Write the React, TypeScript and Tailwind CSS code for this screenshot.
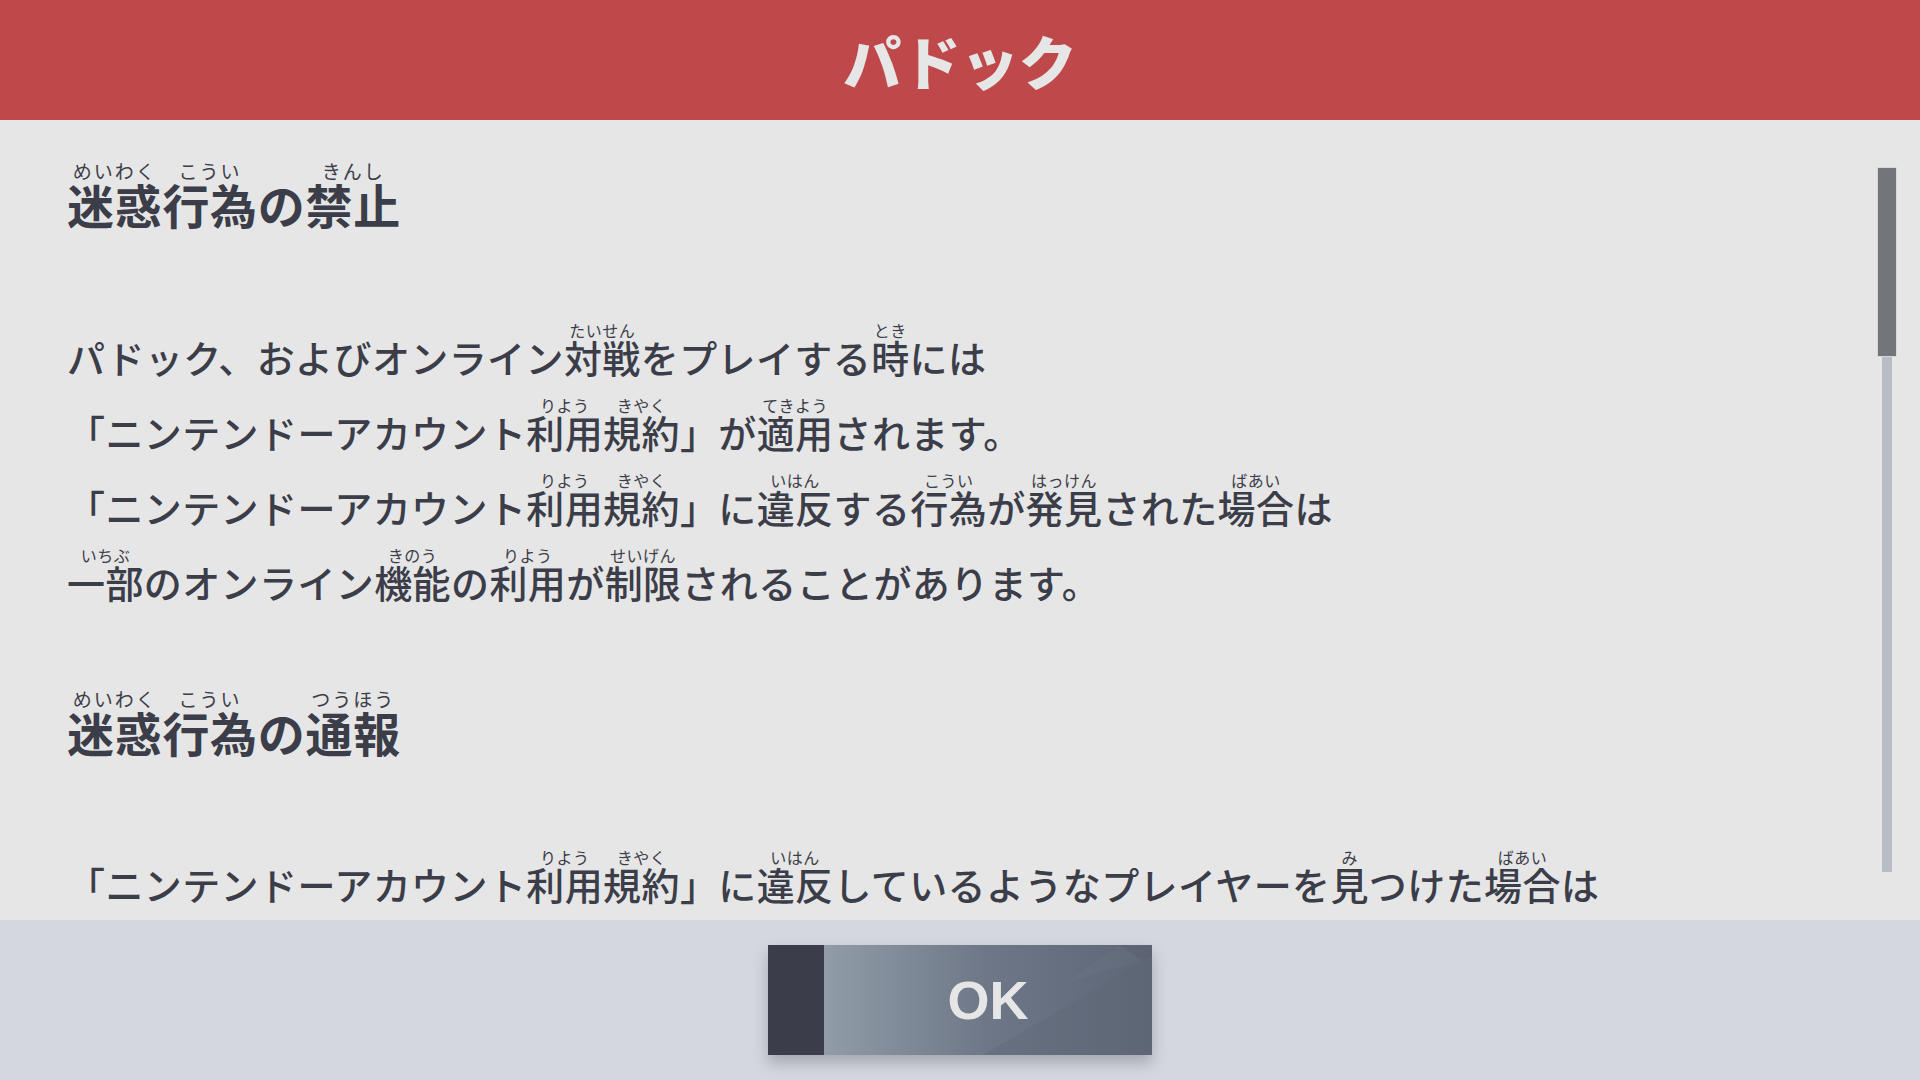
import React from "react";

type Seg = string | [string, string];

// paragraph lines; tuples are [base, reading]
const rules: Seg[][] = [
  ["パドック、およびオンライン", ["対戦", "たいせん"], "をプレイする", ["時", "とき"], "には"],
  ["「ニンテンドーアカウント", ["利用", "りよう"], ["規約", "きやく"], "」が", ["適用", "てきよう"], "されます。"],
  [
    "「ニンテンドーアカウント",
    ["利用", "りよう"],
    ["規約", "きやく"],
    "」に",
    ["違反", "いはん"],
    "する",
    ["行為", "こうい"],
    "が",
    ["発見", "はっけん"],
    "された",
    ["場合", "ばあい"],
    "は",
  ],
  [
    ["一部", "いちぶ"],
    "のオンライン",
    ["機能", "きのう"],
    "の",
    ["利用", "りよう"],
    "が",
    ["制限", "せいげん"],
    "されることがあります。",
  ],
];

const report: Seg[][] = [
  [
    "「ニンテンドーアカウント",
    ["利用", "りよう"],
    ["規約", "きやく"],
    "」に",
    ["違反", "いはん"],
    "しているようなプレイヤーを",
    ["見", "み"],
    "つけた",
    ["場合", "ばあい"],
    "は",
  ],
];

function Segs({ segs, rt }: { segs: Seg[]; rt: string }) {
  return (
    <>
      {segs.map((s, i) =>
        typeof s === "string" ? (
          <span key={i}>{s}</span>
        ) : (
          <ruby key={i} className="[ruby-align:center]">
            {s[0]}
            <rt className={rt}>{s[1]}</rt>
          </ruby>
        )
      )}
    </>
  );
}

function Heading({ segs, className }: { segs: Seg[]; className?: string }) {
  return (
    <h2 className={`text-[47px] font-bold leading-[75px] tracking-[0.7px] text-[#3b3d48] ${className ?? ""}`}>
      <Segs segs={segs} rt="text-[19px] font-normal tracking-[2px]" />
    </h2>
  );
}

function Lines({ lines, className }: { lines: Seg[][]; className?: string }) {
  return (
    <div className={className}>
      {lines.map((l, i) => (
        <p
          key={i}
          className="whitespace-nowrap text-[38px] font-medium leading-[75px] tracking-[0.4px] text-[#3b3d48]"
        >
          <Segs segs={l} rt="text-[16px] font-normal tracking-[0.5px]" />
        </p>
      ))}
    </div>
  );
}

export default function App() {
  return (
    <div className="flex h-[1080px] w-[1920px] flex-col overflow-hidden bg-[#e6e6e6] font-['Noto_Sans_CJK_JP',sans-serif]">
      <header className="flex h-[120px] shrink-0 items-center justify-center bg-[#bf494a]">
        <h1 className="text-[58px] font-black leading-none text-[#e6e6e6]">パドック</h1>
      </header>

      <main className="relative flex-1 overflow-hidden">
        <div className="pl-[67px] pt-[42px]">
          <Heading segs={[["迷惑", "めいわく"], ["行為", "こうい"], "の", ["禁止", "きんし"]]} />
          <Lines lines={rules} className="mt-[78px]" />
          <Heading
            className="mt-[71px]"
            segs={[["迷惑", "めいわく"], ["行為", "こうい"], "の", ["通報", "つうほう"]]}
          />
          <Lines lines={report} className="mt-[77px]" />
        </div>

        {/* scrollbar */}
        <div className="absolute left-[1882px] top-[47px] h-[705px] w-[10px] bg-[#b8bcc4]" />
        <div className="absolute left-[1877px] top-[47px] h-[190px] w-[20px] border border-[#dcd7d7] bg-[#72767b]" />
      </main>

      <footer className="flex h-[160px] shrink-0 items-center justify-center bg-[#d4d7df]">
        <button className="flex h-[110px] w-[384px] shadow-[0_8px_14px_rgba(0,0,0,0.22)]">
          <span className="h-full w-[56px] bg-[#3b3e4a]" />
          <span className="relative flex h-full flex-1 items-center justify-center overflow-hidden bg-gradient-to-r from-[#919ca8] via-[#6d7787] to-[#5e6676]">
            <svg className="absolute inset-0" width="328" height="110" viewBox="0 0 328 110" aria-hidden>
              <polygon points="159,110 328,11 328,110" fill="#5e6676" opacity="0.35" />
              <polygon points="243,37 296,0 319,16" fill="#ffffff" opacity="0.025" />
              <polygon points="296,0 328,0 328,11 319,16" fill="#000000" opacity="0.03" />
            </svg>
            <span className="relative font-['Liberation_Sans',Arial,sans-serif] text-[54px] font-bold leading-none text-[#e6e6e6]">
              OK
            </span>
          </span>
        </button>
      </footer>
    </div>
  );
}
